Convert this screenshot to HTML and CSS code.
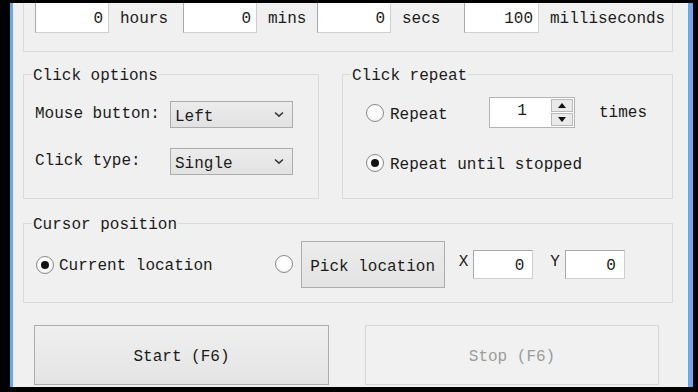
FILE: index.html
```html
<!DOCTYPE html>
<html>
<head>
<meta charset="utf-8">
<link rel="stylesheet" href="styles.css">
</head>
<body>
<div class="frame">
  <div class="group top-group">
    <div class="interval">
      <div class="field num">0</div><div class="unit">hours</div>
      <div class="field num">0</div><div class="unit">mins</div>
      <div class="field num">0</div><div class="unit">secs</div>
      <div class="field num">100</div><div class="unit">milliseconds</div>
    </div>
  </div>

  <div class="middle">
    <div class="group options">
      <span class="legend">Click options</span>
      <div class="opt-grid">
        <span class="lbl">Mouse button:</span>
        <div class="select"><span>Left</span><svg class="chev" width="10" height="7" viewBox="0 0 10 7"><path d="M1 1.5 L5 5.2 L9 1.5" fill="none" stroke="#3a3a3a" stroke-width="1.6"/></svg></div>
        <span class="lbl">Click type:</span>
        <div class="select"><span>Single</span><svg class="chev" width="10" height="7" viewBox="0 0 10 7"><path d="M1 1.5 L5 5.2 L9 1.5" fill="none" stroke="#3a3a3a" stroke-width="1.6"/></svg></div>
      </div>
    </div>

    <div class="group repeat">
      <span class="legend">Click repeat</span>
      <div class="rep-row1">
        <label class="radio"><span class="dot"></span><span class="rtext">Repeat</span></label>
        <div class="spin">
          <span class="spin-val">1</span>
          <div class="spin-btns">
            <span class="spin-btn"><svg width="8" height="5" viewBox="0 0 8 5"><path d="M0 5 L4 0 L8 5 Z" fill="#111"/></svg></span>
            <span class="spin-btn"><svg width="8" height="5" viewBox="0 0 8 5"><path d="M0 0 L4 5 L8 0 Z" fill="#111"/></svg></span>
          </div>
        </div>
        <span class="times">times</span>
      </div>
      <label class="radio rep-row2"><span class="dot checked"></span><span class="rtext">Repeat until stopped</span></label>
    </div>
  </div>

  <div class="group cursor">
    <span class="legend">Cursor position</span>
    <div class="cursor-row">
      <label class="radio current"><span class="dot checked"></span><span class="rtext">Current location</span></label>
      <span class="dot pick-dot"></span>
      <div class="btn pick">Pick location</div>
      <span class="axis">X</span>
      <div class="field num coord">0</div>
      <span class="axis y">Y</span>
      <div class="field num coord">0</div>
    </div>
  </div>

  <div class="actions">
    <div class="btn big">Start (F6)</div>
    <div class="btn big disabled">Stop (F6)</div>
  </div>
</div>
</body>
</html>
```

FILE: styles.css
```css
html, body {
  margin: 0;
  padding: 0;
  background: #000;
  width: 698px;
  height: 392px;
  overflow: hidden;
}

.frame {
  box-sizing: border-box;
  margin: 3px 5px 0 10px;
  height: 384px;
  border-left: 3px solid #6ba6ee;
  border-right: 5px solid #6ba6ee;
  background: #f0f0f0;
  padding: 0 15px 0 10px;
  overflow: hidden;
  font-family: "Liberation Mono", "DejaVu Sans Mono", monospace;
  font-size: 16px;
  color: #1b1b1b;
}

.group {
  position: relative;
  box-sizing: border-box;
  border: 1px solid #dadada;
}

.legend {
  position: absolute;
  top: -9px;
  left: 8px;
  padding: 0 1px;
  line-height: 20px;
  background: #f0f0f0;
  white-space: nowrap;
}

/* top interval group */
.top-group {
  margin-top: -30px;
  height: 79px;
  padding: 27px 11px 0 11px;
}

.interval {
  display: grid;
  grid-template-columns: 74px 74px 74px 60px 74px 73px 75px 1fr;
  height: 32px;
  align-items: center;
}

.field {
  box-sizing: border-box;
  background: #fff;
  border: 1px solid #a9a9a9;
  border-right-color: #cfcfcf;
  border-bottom-color: #cfcfcf;
  height: 32px;
  line-height: 30px;
  padding-top: 2px;
}

.num {
  text-align: right;
  padding-right: 5px;
}

.unit {
  padding-left: 11px;
  padding-top: 3px;
  white-space: nowrap;
}

/* middle groups */
.middle {
  display: flex;
  gap: 23px;
  margin-top: 22px;
}

.options {
  width: 296px;
  height: 125px;
  padding: 26px 0 0 11px;
}

.opt-grid {
  display: grid;
  grid-template-columns: 135px 123px;
  grid-auto-rows: 27px;
  row-gap: 20px;
  align-items: center;
}

.lbl {
  white-space: nowrap;
  position: relative;
  top: -1px;
}

.select {
  box-sizing: border-box;
  height: 27px;
  border: 1px solid #acacac;
  background: linear-gradient(#ececec, #e2e2e2);
  display: flex;
  align-items: center;
  justify-content: space-between;
  padding: 4px 8px 0 4px;
}

.chev {
  display: block;
  margin-top: -4px;
}

.repeat {
  width: 331px;
  height: 125px;
  padding: 22px 0 0 23px;
}

.rep-row1 {
  display: grid;
  grid-template-columns: 123px 86px auto;
  align-items: center;
  height: 31px;
}

.radio {
  display: flex;
  align-items: center;
  gap: 6px;
  white-space: nowrap;
}

.rtext {
  position: relative;
  top: 2px;
}

.dot {
  box-sizing: border-box;
  width: 18px;
  height: 18px;
  border-radius: 50%;
  border: 1px solid #8a8a8a;
  background: radial-gradient(circle at 50% 40%, #ffffff 45%, #e8e8e8 100%);
  flex: none;
  position: relative;
}

.dot.checked::after {
  content: "";
  position: absolute;
  left: 4px;
  top: 4px;
  width: 8px;
  height: 8px;
  border-radius: 50%;
  background: #151515;
}

.spin {
  box-sizing: border-box;
  height: 31px;
  border: 1px solid #b4b4b4;
  background: #fff;
  display: flex;
}

.spin-val {
  flex: 1;
  text-align: center;
  line-height: 26px;
  padding-left: 3px;
}

.spin-btns {
  width: 22px;
  display: flex;
  flex-direction: column;
  padding: 1px 1px 1px 0;
  gap: 1px;
}

.spin-btn {
  flex: 1;
  box-sizing: border-box;
  border: 1px solid #b9b9b9;
  background: #e9e9e9;
  display: flex;
  align-items: center;
  justify-content: center;
}

.spin-btn svg {
  display: block;
}

.times {
  padding-left: 24px;
}

.rep-row2 {
  margin-top: 25px;
  height: 20px;
}

/* cursor group */
.cursor {
  margin-top: 24px;
  width: 650px;
  height: 80px;
  padding: 17px 0 0 12px;
}

.cursor-row {
  display: flex;
  align-items: center;
  height: 47px;
}

.current {
  gap: 5px;
}

.current .rtext {
  top: 1px;
}

.pick-dot {
  margin-left: 62px;
  position: relative;
  top: -1px;
}

.btn {
  box-sizing: border-box;
  border: 1px solid #adadad;
  background: linear-gradient(#ececec, #e3e3e3);
  display: flex;
  align-items: center;
  justify-content: center;
  white-space: nowrap;
}

.pick {
  margin-left: 8px;
  width: 144px;
  height: 47px;
  padding-top: 5px;
}

.axis {
  margin-left: 14px;
  position: relative;
  top: -3px;
}

.axis.y {
  margin-left: 17px;
}

.coord {
  margin-left: 5px;
  width: 60px;
  height: 29px;
  line-height: 27px;
  padding-right: 8px;
}

/* action buttons */
.actions {
  display: flex;
  gap: 36px;
  margin: 22px 0 0 11px;
}

.big {
  width: 295px;
  height: 60px;
  padding-top: 4px;
  background: linear-gradient(#efefef, #e4e4e4);
}

.big.disabled {
  width: 294px;
  border-color: #d6d6d6;
  background: #f1f1f1;
  color: #9c9c9c;
}
```
